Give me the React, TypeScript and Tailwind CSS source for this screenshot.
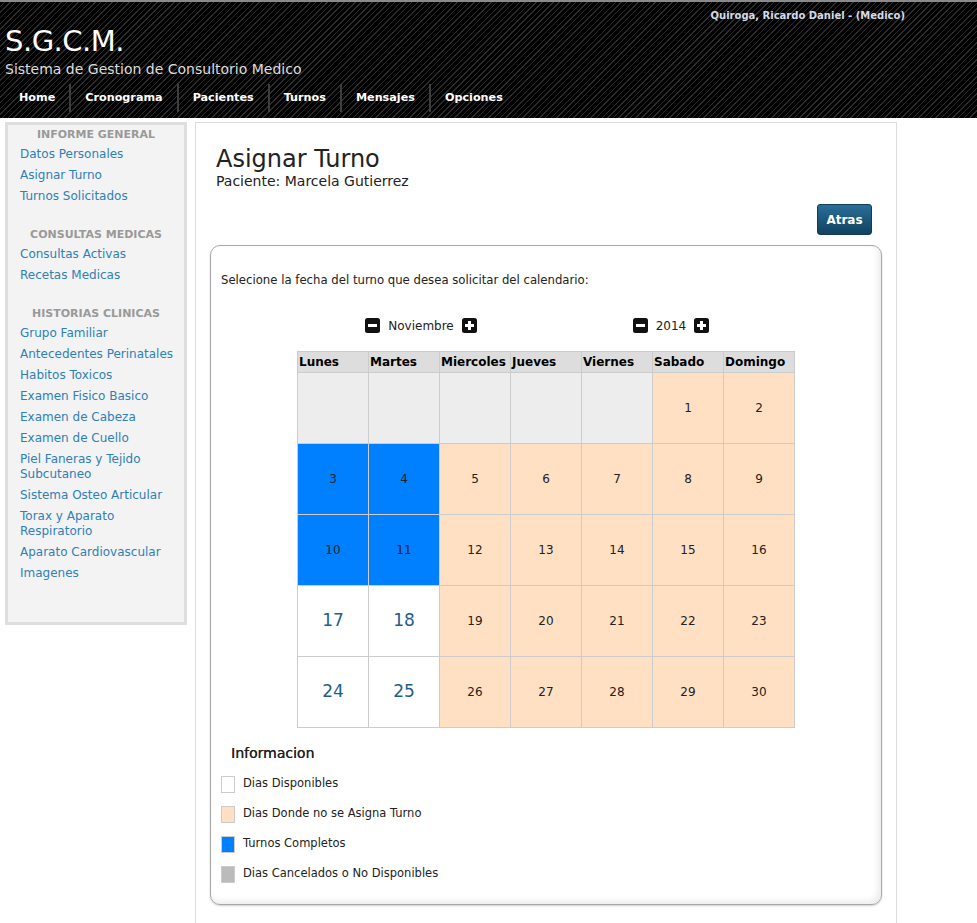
import React from "react"

const navItems = ["Home", "Cronograma", "Pacientes", "Turnos", "Mensajes", "Opciones"]

const sidebar = [
  {
    title: "INFORME GENERAL",
    links: ["Datos Personales", "Asignar Turno", "Turnos Solicitados"],
  },
  {
    title: "CONSULTAS MEDICAS",
    links: ["Consultas Activas", "Recetas Medicas"],
  },
  {
    title: "HISTORIAS CLINICAS",
    links: [
      "Grupo Familiar",
      "Antecedentes Perinatales",
      "Habitos Toxicos",
      "Examen Fisico Basico",
      "Examen de Cabeza",
      "Examen de Cuello",
      "Piel Faneras y Tejido Subcutaneo",
      "Sistema Osteo Articular",
      "Torax y Aparato Respiratorio",
      "Aparato Cardiovascular",
      "Imagenes",
    ],
  },
]

const days = ["Lunes", "Martes", "Miercoles", "Jueves", "Viernes", "Sabado", "Domingo"]

// e = empty, n = no se asigna, c = completo, d = disponible
type Kind = "e" | "n" | "c" | "d"
const weeks: { day: number | null; kind: Kind }[][] = [
  [
    { day: null, kind: "e" },
    { day: null, kind: "e" },
    { day: null, kind: "e" },
    { day: null, kind: "e" },
    { day: null, kind: "e" },
    { day: 1, kind: "n" },
    { day: 2, kind: "n" },
  ],
  [
    { day: 3, kind: "c" },
    { day: 4, kind: "c" },
    { day: 5, kind: "n" },
    { day: 6, kind: "n" },
    { day: 7, kind: "n" },
    { day: 8, kind: "n" },
    { day: 9, kind: "n" },
  ],
  [
    { day: 10, kind: "c" },
    { day: 11, kind: "c" },
    { day: 12, kind: "n" },
    { day: 13, kind: "n" },
    { day: 14, kind: "n" },
    { day: 15, kind: "n" },
    { day: 16, kind: "n" },
  ],
  [
    { day: 17, kind: "d" },
    { day: 18, kind: "d" },
    { day: 19, kind: "n" },
    { day: 20, kind: "n" },
    { day: 21, kind: "n" },
    { day: 22, kind: "n" },
    { day: 23, kind: "n" },
  ],
  [
    { day: 24, kind: "d" },
    { day: 25, kind: "d" },
    { day: 26, kind: "n" },
    { day: 27, kind: "n" },
    { day: 28, kind: "n" },
    { day: 29, kind: "n" },
    { day: 30, kind: "n" },
  ],
]

const cellClass: Record<Kind, string> = {
  e: "bg-[#ededed]",
  n: "bg-[#ffe0c3] text-[12px] text-[#222]",
  c: "bg-[#0080ff] text-[12px] text-[#222]",
  d: "bg-white text-[17px] text-[#1d5f8c]",
}

const legend = [
  { label: "Dias Disponibles", box: "bg-white" },
  { label: "Dias Donde no se Asigna Turno", box: "bg-[#ffe0c3]" },
  { label: "Turnos Completos", box: "bg-[#0080ff]" },
  { label: "Dias Cancelados o No Disponibles", box: "bg-[#bbbbbb]" },
]

function StepIcon({ plus }: { plus?: boolean }) {
  return (
    <svg width="15" height="15" viewBox="0 0 15 15">
      <rect x="0" y="0" width="15" height="15" rx="2.5" fill="#111" />
      <rect x="3" y="6" width="9" height="3" fill="#fff" />
      {plus && <rect x="6" y="3" width="3" height="9" fill="#fff" />}
    </svg>
  )
}

export default function App() {
  return (
    <div className="min-h-[923px] bg-white font-['DejaVu_Sans',sans-serif]">
      {/* Header */}
      <header className="h-[118px] border-t-2 border-[#8a8a8a] bg-black bg-[repeating-linear-gradient(135deg,#000_0px,#000_3px,#2b2b2b_3px,#2b2b2b_4px)]">
        <div className="flex justify-end pr-[72px] pt-[6px]">
          <span className="text-[10px] font-bold text-[#d6dbe6]">Quiroga, Ricardo Daniel - (Medico)</span>
        </div>
        <div className="pl-[5px] pt-[3px] text-[29px] leading-[30px] tracking-[-0.5px] text-white">S.G.C.M.</div>
        <div className="pl-[5px] pt-[4px] text-[14px] leading-[18px] text-[#dddddd]">
          Sistema de Gestion de Consultorio Medico
        </div>
        <nav className="mt-[6px] flex pl-[5px]">
          {navItems.map((item, i) => (
            <div
              key={item}
              className={`flex h-[28px] items-center px-[14px] text-[11.2px] font-bold text-white ${
                i > 0 ? "border-l-2 border-[#3d3d42]" : ""
              }`}
            >
              {item}
            </div>
          ))}
        </nav>
      </header>

      <div className="mt-[4px] flex items-start gap-[8px] pl-[5px]">
        {/* Sidebar */}
        <aside className="h-[503px] w-[182px] border-[3px] border-[#dedede] bg-[#f3f3f3] pt-[1px]">
          {sidebar.map((sec, i) => (
            <div key={sec.title} className={i > 0 ? "mt-[19px]" : ""}>
              <div className="text-center text-[11px] leading-[17px] font-bold text-[#999999]">{sec.title}</div>
              <ul className="pl-[12px] pt-[1px]">
                {sec.links.map((l) => (
                  <li key={l} className="py-[3px] text-[12px] leading-[15px] text-[#2f7fb8]">
                    {l}
                  </li>
                ))}
              </ul>
            </div>
          ))}
        </aside>

        {/* Main */}
        <main className="min-h-[805px] w-[702px] border border-[#dddddd] bg-white px-[14px] pt-[22px] pb-[16px]">
          <div className="pl-[6px]">
            <h1 className="text-[24px] leading-[28px] text-[#222]">Asignar Turno</h1>
            <p className="text-[14px] leading-[16px] text-[#222]">Paciente: Marcela Gutierrez</p>
          </div>
          <div className="mt-[15px] flex justify-end pr-[10px]">
            <button className="h-[31px] w-[55px] rounded-[3px] border border-[#0f3d5c] bg-gradient-to-b from-[#2a6e98] to-[#12425f] text-[12px] font-bold text-white">
              Atras
            </button>
          </div>
          <section className="mt-[10px] h-[660px] rounded-[10px] border border-[#a8a8a8] shadow-[inset_-3px_-3px_6px_rgba(0,0,0,0.08),0_1px_2px_rgba(0,0,0,0.2)] px-[10px] pt-[26px]">
            <p className="text-[11.7px] text-[#222]">Selecione la fecha del turno que desea solicitar del calendario:</p>

            <div className="mx-auto mt-[27px] flex w-[500px]">
              <div className="flex w-[250px] items-center justify-center gap-[8px]">
                <StepIcon />
                <span className="text-[12px] text-[#222]">Noviembre</span>
                <StepIcon plus />
              </div>
              <div className="flex w-[250px] items-center justify-center gap-[8px]">
                <StepIcon />
                <span className="text-[12px] text-[#222]">2014</span>
                <StepIcon plus />
              </div>
            </div>

            <table className="mx-auto mt-[16px] w-[498px] table-fixed border-collapse">
              <thead>
                <tr>
                  {days.map((d) => (
                    <th
                      key={d}
                      className="h-[21px] border border-[#cccccc] bg-[#dddddd] pl-[1px] text-left text-[12px] font-bold text-black"
                    >
                      {d}
                    </th>
                  ))}
                </tr>
              </thead>
              <tbody>
                {weeks.map((w, i) => (
                  <tr key={i}>
                    {w.map((c, j) => (
                      <td
                        key={j}
                        className={`h-[71px] border border-[#cccccc] text-center align-middle ${cellClass[c.kind]}`}
                      >
                        {c.day}
                      </td>
                    ))}
                  </tr>
                ))}
              </tbody>
            </table>

            <h3 className="mt-[15px] pl-[10px] text-[14px] text-[#222] [text-shadow:0.3px_0_0_#222]">Informacion</h3>
            <ul className="mt-[12px] flex flex-col gap-[13px]">
              {legend.map((l) => (
                <li key={l.label} className="flex h-[17px] items-center gap-[8px]">
                  <span className={`h-[17px] w-[14px] border border-[#cccccc] ${l.box}`} />
                  <span className="text-[11.5px] text-[#222]">{l.label}</span>
                </li>
              ))}
            </ul>
          </section>
        </main>
      </div>
    </div>
  )
}
